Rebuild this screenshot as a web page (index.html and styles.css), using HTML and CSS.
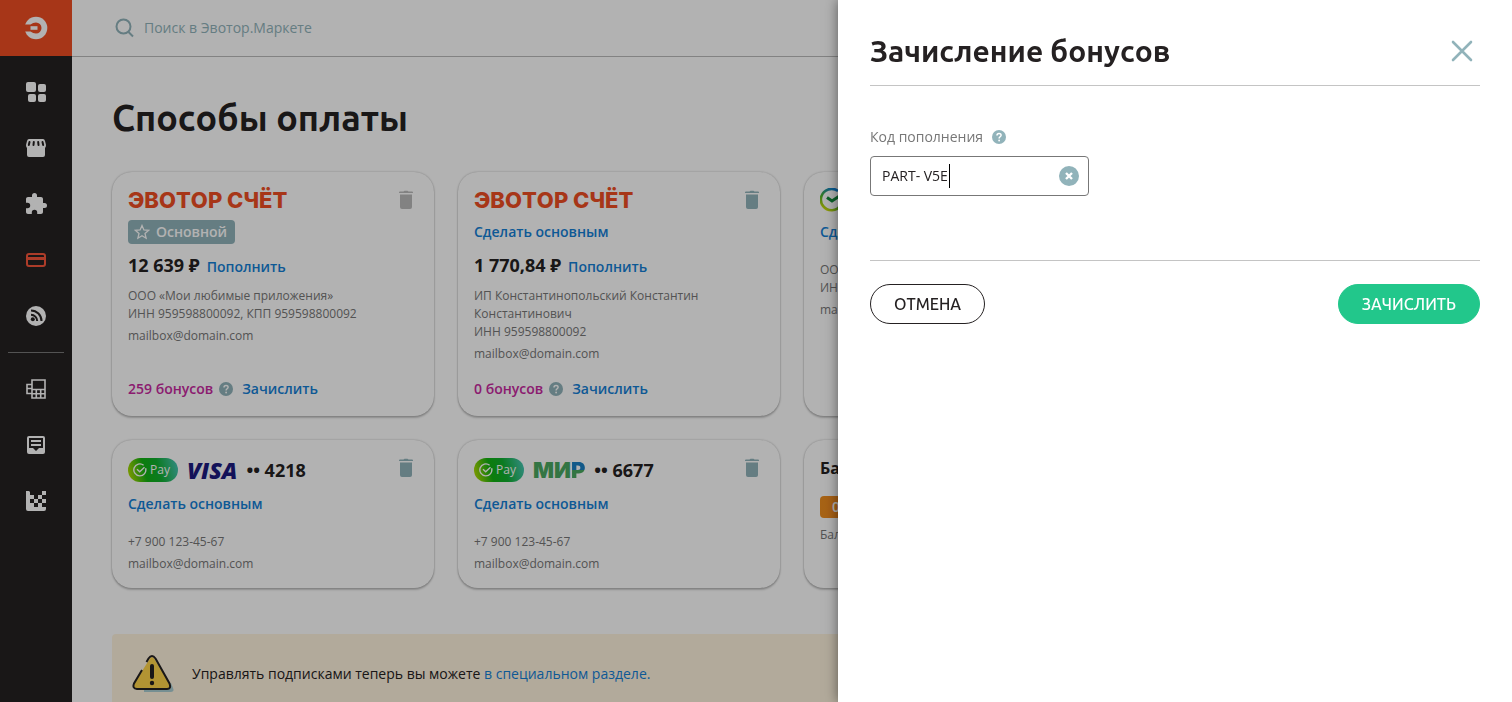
FILE: index.html
```html
<!DOCTYPE html>
<html lang="ru">
<head>
  <meta charset="UTF-8" />
  <meta name="viewport" content="width=device-width, initial-scale=1.0"/>
  <title>Способы оплаты - Эвотор.Маркет</title>
  <link rel="stylesheet" href="styles.css">
</head>
<body>
  <!-- Shared icons -->
  <svg class="sprite" aria-hidden="true">
    <symbol id="trash" viewBox="0 0 24 24">
      <path d="M5 4.500Q5 3.500 6 3.500H9.500L10.500 2.700H13.500L14.500 3.500H18Q19 3.500 19 4.500V5H5Z"/>
      <path d="M6 6.500H18V19Q18 21 16 21H8Q6 21 6 19Z"/>
    </symbol>
    <symbol id="help" viewBox="0 0 14 14">
      <circle cx="7" cy="7" r="7"/>
      <path d="M5 5.500C5 2.900 9.100 2.900 9.100 5.300C9.100 6.800 7.100 6.800 7.100 8.500" fill="none" stroke="#fff" stroke-width="1.500"/>
      <circle cx="7.100" cy="10.500" r="0.900" fill="#fff"/>
    </symbol>
    <symbol id="sbp-check" viewBox="0 0 14 14">
      <path d="M12.600 5.200A6 6 0 1 1 10.600 2.200M4 6.300L6.700 8.700L11.500 4.300" fill="none" stroke="#fff" stroke-width="1.400"/>
    </symbol>
  </svg>

  <aside class="sidebar">
    <a href="#" class="logo" aria-label="Эвотор">
      <svg width="24" height="24" viewBox="0 0 24 24">
        <circle cx="12" cy="12" r="11.300" fill="#fff"/>
        <path d="M0 8.500H6.500Q9 6.500 12 6.500A5.500 5.500 0 0 1 12 17.500Q9 17.500 6.500 15.500H0Z" fill="#f04e23"/>
        <path d="M6.500 10.200H13.500V13.800H6.500Z" fill="#fff"/>
      </svg>
    </a>
    <nav class="menu">
      <a href="#" aria-label="Главная">
        <svg width="24" height="24" viewBox="0 0 24 24"><rect x="2" y="2" width="10" height="10" rx="2"/><rect x="14" y="4" width="8" height="8" rx="2"/><rect x="4" y="14" width="8" height="8" rx="2"/><rect x="14" y="14" width="8" height="8" rx="2"/></svg>
      </a>
      <a href="#" aria-label="Магазины">
        <svg width="24" height="24" viewBox="0 0 24 24"><path d="M5 3H19Q20.500 3 21 5L22 9Q22 11 21 12V19Q21 21 19 21H5Q3 21 3 19V12Q2 11 2 9L3 5Q3.500 3 5 3Z"/><path d="M5.500 6L4.800 9M9.800 6L9.500 9M14.200 6L14.500 9M18.500 6L19.200 9" stroke="#252122" stroke-width="2" stroke-linecap="round"/></svg>
      </a>
      <a href="#" aria-label="Приложения">
        <svg width="24" height="24" viewBox="0 0 24 24"><path d="M20.500 11H19V7c0-1.100-.9-2-2-2h-4V3.500a2.500 2.500 0 0 0-5 0V5H4c-1.100 0-2 .9-2 2v3.800h1.500a2.700 2.700 0 0 1 0 5.400H2V20c0 1.100.9 2 2 2h3.800v-1.500a2.700 2.700 0 0 1 5.400 0V22H17c1.100 0 2-.9 2-2v-4h1.500a2.500 2.500 0 0 0 0-5z"/></svg>
      </a>
      <a href="#" class="active" aria-label="Способы оплаты">
        <svg width="24" height="24" viewBox="0 0 24 24"><rect x="3" y="6" width="18" height="12" rx="2" fill="none" stroke="currentColor" stroke-width="2"/><path d="M3 9H21V12H3Z"/></svg>
      </a>
      <a href="#" aria-label="Новости">
        <svg width="24" height="24" viewBox="0 0 24 24"><circle cx="12" cy="12" r="10"/><g fill="none" stroke="#252122" stroke-width="2"><path d="M7 6.500A10.500 10.500 0 0 1 17.500 17M7 10.800A6.200 6.200 0 0 1 13.200 17"/></g><circle cx="8.800" cy="15.200" r="2" fill="#252122"/></svg>
      </a>
    </nav>
    <nav class="menu menu-extra">
      <a href="#" aria-label="Кассы">
        <svg width="24" height="24" viewBox="0 0 24 24"><path d="M8 3H21V21H8ZM8 12.500H21M12.300 12.500V21M16.700 12.500V21M8 16.700H21" fill="none" stroke="currentColor" stroke-width="1.600"/><path d="M8 7.500H3V16.500H8M3 11.500H8" fill="none" stroke="currentColor" stroke-width="1.600"/></svg>
      </a>
      <a href="#" aria-label="Сообщения">
        <svg width="24" height="24" viewBox="0 0 24 24"><rect x="3" y="3" width="18" height="18" rx="2"/><path d="M5 5H19V15H15L12 18L9 15H5Z" fill="#252122"/><path d="M7 7H17V9H7ZM7 11H17V13H7Z"/></svg>
      </a>
      <a href="#" aria-label="Аналитика">
        <svg width="24" height="24" viewBox="0 0 24 24"><path d="M2 2H5L6 3V6H10V10H6V14H10V18H22V20Q22 22 20 22H4Q2 22 2 20ZM10 10H14V14H10ZM14 6H18V10H14ZM18 2H22V6H18ZM14 14H18V18H14ZM18 10H22V14H18Z"/></svg>
      </a>
    </nav>
  </aside>

  <div class="page">
    <header class="topbar">
      <svg width="24" height="24" viewBox="0 0 24 24" fill="none" stroke="currentColor" stroke-width="2"><circle cx="11.500" cy="10.500" r="7"/><path d="M16.500 16L21 20.500"/></svg>
      <input type="search" placeholder="Поиск в Эвотор.Маркете" aria-label="Поиск">
    </header>

    <main class="content">
      <h1>Способы оплаты</h1>

      <div class="cards">
        <section class="card">
          <div class="card-head">
            <span class="brand">ЭВОТОР СЧЁТ</span>
            <button class="trash trash-off" aria-label="Удалить" disabled><svg width="24" height="24"><use href="#trash"/></svg></button>
          </div>
          <span class="badge">
            <svg width="16" height="16" viewBox="0 0 16 16"><path d="M8 1.500L9.900 5.900L14.700 6.300L11 9.500L12.100 14.200L8 11.700L3.900 14.200L5 9.500L1.300 6.300L6.100 5.900Z" fill="none" stroke="currentColor" stroke-width="1.300"/></svg>
            Основной
          </span>
          <div class="amount"><strong>12 639 ₽</strong><a href="#">Пополнить</a></div>
          <div class="details">
            <p>ООО «Мои любимые приложения»<br>ИНН 959598800092, КПП 959598800092</p>
            <p>mailbox@domain.com</p>
          </div>
          <div class="bonus"><span>259 бонусов</span><svg width="14" height="14"><use href="#help"/></svg><a href="#">Зачислить</a></div>
        </section>

        <section class="card">
          <div class="card-head">
            <span class="brand">ЭВОТОР СЧЁТ</span>
            <button class="trash" aria-label="Удалить"><svg width="24" height="24"><use href="#trash"/></svg></button>
          </div>
          <a href="#" class="make-main">Сделать основным</a>
          <div class="amount"><strong>1 770,84 ₽</strong><a href="#">Пополнить</a></div>
          <div class="details">
            <p>ИП Константинопольский Константин Константинович<br>ИНН 959598800092</p>
            <p>mailbox@domain.com</p>
          </div>
          <div class="bonus"><span>0 бонусов</span><svg width="14" height="14"><use href="#help"/></svg><a href="#">Зачислить</a></div>
        </section>

        <section class="card">
          <div class="card-head">
            <svg width="24" height="24" viewBox="0 0 24 24" fill="none">
              <defs>
                <linearGradient id="sber" x1="0" y1="1" x2="0.600" y2="0"><stop offset="0" stop-color="#f2e500"/><stop offset="0.500" stop-color="#4fb52c"/><stop offset="1" stop-color="#0a7fd6"/></linearGradient>
              </defs>
              <path d="M21.500 7.500A10.700 10.700 0 1 1 18 3" stroke="url(#sber)" stroke-width="2.600"/>
              <path d="M7 9.500L12 13L21 7" stroke="#128c3c" stroke-width="3"/>
            </svg>
          </div>
          <a href="#" class="make-main">Сделать основным</a>
          <div class="details">
            <p>ООО «Мои любимые приложения»<br>ИНН 959598800092</p>
            <p>mailbox@domain.com</p>
          </div>
        </section>

        <section class="card card-pay">
          <div class="card-head">
            <span class="pay"><svg width="14" height="14"><use href="#sbp-check"/></svg>Pay</span>
            <span class="visa">VISA</span>
            <strong>•• 4218</strong>
            <button class="trash" aria-label="Удалить"><svg width="24" height="24"><use href="#trash"/></svg></button>
          </div>
          <a href="#" class="make-main">Сделать основным</a>
          <div class="details">
            <p>+7 900 123-45-67</p>
            <p>mailbox@domain.com</p>
          </div>
        </section>

        <section class="card card-pay">
          <div class="card-head">
            <span class="pay"><svg width="14" height="14"><use href="#sbp-check"/></svg>Pay</span>
            <span class="mir">МИ<b>Р</b></span>
            <strong>•• 6677</strong>
            <button class="trash" aria-label="Удалить"><svg width="24" height="24"><use href="#trash"/></svg></button>
          </div>
          <a href="#" class="make-main">Сделать основным</a>
          <div class="details">
            <p>+7 900 123-45-67</p>
            <p>mailbox@domain.com</p>
          </div>
        </section>

        <section class="card card-balance">
          <h2>Баланс</h2>
          <span class="points">0 баллов</span>
          <p>Баланс</p>
        </section>
      </div>

      <div class="notice">
        <svg width="44" height="40" viewBox="0 0 44 40">
          <path d="M12 38H38Q43 38 41 34L39 29H12Z" fill="#a9cdd2"/>
          <path d="M17 6Q20 0 23 6L38 30Q40 35 36 35H5Q0 35 2 30Z" fill="#ffd54a"/>
          <path d="M14.500 8L16.500 4.500Q20 -0.500 23.500 4.500L37.500 29.500Q39.500 35 35 35H5Q0 34.500 2 29.500L10 16" fill="none" stroke="#252122" stroke-width="2"/>
          <path d="M20 12V23" stroke="#252122" stroke-width="4" stroke-linecap="round"/>
          <circle cx="20" cy="29" r="2.200" fill="#252122"/>
        </svg>
        <p>Управлять подписками теперь вы можете <a href="#">в специальном разделе.</a></p>
      </div>
    </main>
  </div>

  <div class="overlay"></div>

  <form class="drawer">
    <div class="drawer-head">
      <h2>Зачисление бонусов</h2>
      <button type="button" class="close" aria-label="Закрыть">
        <svg width="24" height="24" viewBox="0 0 24 24"><path d="M3 3L21 21M21 3L3 21" stroke="currentColor" stroke-width="2.600" stroke-linecap="round"/></svg>
      </button>
    </div>
    <div class="drawer-body">
      <div class="label-row">
        <label for="code">Код пополнения</label>
        <svg width="14" height="14"><use href="#help"/></svg>
      </div>
      <div class="field">
        <input type="text" id="code" value="PART- V5E">
        <span class="caret"></span>
        <button type="button" class="clear" aria-label="Очистить">
          <svg width="20" height="20" viewBox="0 0 20 20"><circle cx="10" cy="10" r="10" fill="currentColor"/><path d="M7 7L13 13M13 7L7 13" stroke="#fff" stroke-width="2.400"/></svg>
        </button>
      </div>
    </div>
    <div class="drawer-foot">
      <button type="button" class="btn">ОТМЕНА</button>
      <button type="submit" class="btn btn-green">ЗАЧИСЛИТЬ</button>
    </div>
  </form>
</body>
</html>
```
FILE: styles.css
```css
* {
  box-sizing: border-box;
}
body {
  margin: 0;
  font-family: "Open Sans", "Noto Sans", sans-serif;
  font-size: 14px;
  line-height: 24px;
  font-kerning: none;
  color: #252122;
  background: #fff;
  overflow: hidden;
}
h1, h2, p {
  margin: 0;
}
a {
  color: #1480d6;
  text-decoration: none;
}
button {
  padding: 0;
  border: 0;
  background: none;
  font-family: inherit;
}
button, input {
  font-kerning: inherit;
}
svg {
  display: block;
  flex-shrink: 0;
}
.sprite {
  position: absolute;
  width: 0;
  height: 0;
}

/* Sidebar */
.sidebar {
  position: fixed;
  top: 0;
  bottom: 0;
  left: 0;
  width: 72px;
  background: #252122;
}
.logo {
  display: flex;
  align-items: center;
  justify-content: center;
  height: 56px;
  background: #f04e23;
}
.menu {
  margin: 8px 8px 0;
}
.menu a {
  display: flex;
  align-items: center;
  justify-content: center;
  height: 56px;
  color: #fff;
}
.menu svg {
  fill: currentColor;
}
.menu a.active {
  color: #f8573c;
}
.menu-extra {
  padding-top: 8px;
  border-top: 1px solid #777;
}

/* Page */
.page {
  margin-left: 72px;
}
.topbar {
  display: flex;
  align-items: center;
  gap: 8px;
  height: 57px;
  padding: 0 40px;
  border-bottom: 1px solid #bbb;
  color: #91b3ba;
}
.topbar input {
  flex: 1;
  padding: 0;
  border: 0;
  background: none;
  font: inherit;
}
.topbar input::placeholder {
  color: #91b3ba;
}
.content {
  padding: 37px 40px;
}
h1 {
  margin-bottom: 30px;
  font-family: "Ubuntu", "Noto Sans", sans-serif;
  font-size: 36px;
  line-height: 48px;
}
.cards {
  display: grid;
  grid-template-columns: repeat(4, 1fr);
  gap: 24px;
}
.card {
  display: flex;
  flex-direction: column;
  align-items: flex-start;
  min-height: 148px;
  padding: 16px 16px 15px;
  border-radius: 20px;
  box-shadow: 0 0 2px rgba(0,0,0,0.3), 0 2px 2px rgba(0,0,0,0.2);
}
.card:nth-child(-n+3) {
  min-height: 244px;
}
.card:nth-child(4) {
  grid-column: 1;
}
.card-head {
  display: flex;
  align-items: center;
  gap: 9px;
  width: 100%;
  margin-bottom: 8px;
}
.card-pay .card-head {
  height: 28px;
}
.card-head strong, .amount strong {
  font-family: "Noto Sans", sans-serif;
  font-size: 18px;
}
.brand {
  font-family: "Inter", sans-serif;
  font-size: 22px;
  font-weight: 800;
  color: #f04e23;
}
.trash {
  align-self: flex-start;
  height: 24px;
  margin-left: auto;
  fill: #91b3ba;
}
.trash-off {
  fill: #bbb;
}
.badge {
  display: flex;
  align-items: center;
  gap: 6px;
  padding: 0 8px 0 6px;
  border-radius: 4px;
  background: #91b3ba;
  color: #fff;
  font-weight: 600;
}
.make-main, .amount a, .bonus {
  font-weight: 600;
}
.amount {
  display: flex;
  align-items: baseline;
  gap: 7px;
  margin-top: 9px;
}
.details {
  margin-top: 17px;
  font-size: 12px;
  line-height: 18px;
  color: #777;
}
.amount + .details {
  margin-top: 8px;
}
.details p + p {
  margin-top: 4px;
}
.bonus {
  display: flex;
  align-items: center;
  gap: 6px;
  margin-top: auto;
  color: #c8299f;
}
.bonus svg, .label-row svg {
  fill: #91b3ba;
}
.bonus a {
  margin-left: 3px;
}
.pay {
  display: flex;
  align-items: center;
  gap: 3px;
  height: 24px;
  padding: 0 8px 0 5px;
  border-radius: 12px;
  background: linear-gradient(75deg, #c5e000 0%, #12b312 35%, #10b030 60%, #4cc8c0 100%);
  color: #fff;
  font-size: 12px;
}
.visa {
  font-family: "Open Sans", sans-serif;
  font-size: 23px;
  font-weight: 800;
  font-style: italic;
  color: #1c1a80;
}
.mir {
  font-family: "Inter", sans-serif;
  font-size: 22px;
  font-weight: 900;
  color: #4aa860;
}
.mir b {
  font-weight: 900;
  background: linear-gradient(#1a80c4 50%, #4aa860 50%);
  -webkit-background-clip: text;
  background-clip: text;
  color: transparent;
}
.card-balance h2 {
  margin-bottom: 16px;
  font-size: 16px;
}
.points {
  padding: 0 12px;
  border-radius: 4px;
  background: linear-gradient(90deg, #f09020, #f06a18);
  color: #fff;
  font-weight: 600;
  line-height: 22px;
}
.card-balance p {
  margin-top: 8px;
  font-size: 12px;
  line-height: 18px;
  color: #777;
}
.notice {
  display: flex;
  align-items: center;
  gap: 16px;
  margin-top: 46px;
  padding: 20px;
  border-radius: 4px;
  background: #fff4df;
}

/* Drawer */
.overlay {
  position: fixed;
  inset: 0;
  background: rgba(0,0,0,0.3);
}
.drawer {
  position: fixed;
  top: 0;
  right: 0;
  bottom: 0;
  width: 674px;
  padding: 0 32px;
  background: #fff;
  box-shadow: 0 0 12px rgba(0,0,0,0.5);
}
.drawer-head {
  display: flex;
  align-items: center;
  justify-content: space-between;
  padding: 31px 6px 14px 0;
  border-bottom: 1px solid #c4c4c4;
}
.drawer-head h2 {
  font-family: "Ubuntu", "Noto Sans", sans-serif;
  font-size: 30px;
  line-height: 40px;
}
.close {
  color: #91b3ba;
}
.drawer-body {
  padding: 39px 0 64px;
}
.label-row {
  display: flex;
  align-items: center;
  gap: 9px;
  margin-bottom: 7px;
  color: #777;
}
.field {
  position: relative;
  width: 219px;
}
.field input {
  display: block;
  width: 100%;
  height: 40px;
  padding: 0 40px 2px 11px;
  border: 1px solid #777;
  border-radius: 4px;
  outline: none;
  color: inherit;
  font: inherit;
}
.caret {
  position: absolute;
  top: 8px;
  left: 79px;
  width: 1px;
  height: 24px;
  background: #000;
}
.clear {
  position: absolute;
  top: 10px;
  right: 10px;
  color: #91b3ba;
}
.drawer-foot {
  display: flex;
  justify-content: space-between;
  padding-top: 23px;
  border-top: 1px solid #c4c4c4;
}
.btn {
  height: 40px;
  padding: 0 23px;
  border: 1px solid #252122;
  border-radius: 20px;
  color: #252122;
  font-family: "Ubuntu", "Noto Sans", sans-serif;
  font-size: 16px;
  font-weight: 500;
}
.btn-green {
  border-color: #22c78b;
  background: #22c78b;
  color: #fff;
}
```
